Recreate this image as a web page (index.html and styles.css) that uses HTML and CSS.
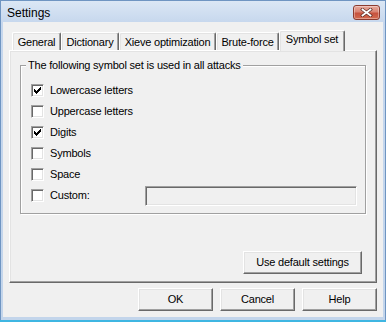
FILE: index.html
```html
<!DOCTYPE html>
<html>
<head>
<meta charset="utf-8">
<link rel="stylesheet" href="styles.css">
</head>
<body>
<div class="window">
  <div class="titlebar">
    <span class="title">Settings</span>
    <div class="close">
      <svg width="13" height="9" viewBox="0 0 13 9">
        <path d="M2.5 1.5 L10.5 7.5 M10.5 1.5 L2.5 7.5" stroke="#5a2a22" stroke-width="3.2" stroke-linecap="square"/>
        <path d="M2.5 1.5 L10.5 7.5 M10.5 1.5 L2.5 7.5" stroke="#ffffff" stroke-width="1.8" stroke-linecap="square"/>
      </svg>
    </div>
  </div>
  <div class="client">
    <div class="tabs">
      <div class="tab t-general">General</div>
      <div class="tab t-dict">Dictionary</div>
      <div class="tab t-xieve">Xieve optimization</div>
      <div class="tab t-brute">Brute-force</div>
      <div class="tab tab-active t-symbol">Symbol set</div>
    </div>
    <div class="panel">
      <div class="group">
        <span class="legend">The following symbol set is used in all attacks</span>
        <div class="row"><span class="check checked"><svg width="7" height="7" viewBox="0 0 7 7"><path d="M0 2h1v3h-1zM1 3h1v3h-1zM2 4h1v3h-1zM3 3h1v3h-1zM4 2h1v3h-1zM5 1h1v3h-1zM6 0h1v3h-1z" fill="#000"/></svg></span><span class="label">Lowercase letters</span></div>
        <div class="row"><span class="check"></span><span class="label">Uppercase letters</span></div>
        <div class="row"><span class="check checked"><svg width="7" height="7" viewBox="0 0 7 7"><path d="M0 2h1v3h-1zM1 3h1v3h-1zM2 4h1v3h-1zM3 3h1v3h-1zM4 2h1v3h-1zM5 1h1v3h-1zM6 0h1v3h-1z" fill="#000"/></svg></span><span class="label">Digits</span></div>
        <div class="row"><span class="check"></span><span class="label">Symbols</span></div>
        <div class="row"><span class="check"></span><span class="label">Space</span></div>
        <div class="row"><span class="check"></span><span class="label">Custom:</span><span class="textbox"></span></div>
      </div>
      <div class="panel-actions">
        <div class="btn btn-wide">Use default settings</div>
      </div>
    </div>
    <div class="dialog-buttons">
      <div class="btn">OK</div>
      <div class="btn">Cancel</div>
      <div class="btn">Help</div>
    </div>
  </div>
</div>
</body>
</html>
```
FILE: styles.css
```css
* { box-sizing: border-box; }
html, body { margin: 0; padding: 0; }
body {
  width: 386px;
  height: 322px;
  overflow: hidden;
  background: #3fb6e2;
  font-family: "Liberation Sans", Arial, sans-serif;
  font-size: 11px;
  letter-spacing: -0.2px;
  color: #000;
}
.window {
  width: 386px;
  height: 320px;
  background: linear-gradient(to bottom, #dbe7f5 0px, #c6d7ed 22px, #c3d5eb 100%);
  border-left: 1px solid #6f95c2;
  border-right: 1px solid #6f95c2;
  border-top: 1px solid #6f95c2;
  display: flex;
  flex-direction: column;
}
.titlebar {
  height: 21px;
  display: flex;
  align-items: flex-start;
  justify-content: space-between;
  padding-left: 6px;
  padding-right: 5px;
}
.title {
  font-size: 12px;
  letter-spacing: 0;
  line-height: 14px;
  margin-top: 5px;
  color: #000;
}
.close {
  width: 27px;
  height: 15px;
  margin-top: 4px;
  border: 1px solid #8b3b2f;
  border-radius: 3px;
  background: linear-gradient(to bottom, #e8aa9c 0%, #d98473 45%, #c6523e 55%, #d36a4f 100%);
  box-shadow: inset 0 0 0 1px rgba(255,255,255,0.35);
  display: flex;
  align-items: center;
  justify-content: center;
}
.client {
  flex: 1;
  margin: 0 2px 3px 2px;
  background: #f0f0f0;
  display: flex;
  flex-direction: column;
}
.tabs {
  margin-top: 8px;
  height: 20px;
  padding-left: 9px;
  display: flex;
  align-items: flex-end;
  position: relative;
  z-index: 1;
}
.tab {
  height: 18px;
  line-height: 13px;
  padding-top: 3px;
  text-align: center;
  white-space: nowrap;
  border-top: 1px solid #fff;
  border-left: 1px solid #fff;
  border-right: 1px solid #696969;
  border-top-left-radius: 2px;
  border-top-right-radius: 2px;
  box-shadow: inset -1px 0 0 #a0a0a0, inset 1px 1px 0 #e3e3e3;
  background: #f0f0f0;
}
.t-general { width: 49px; }
.t-dict { width: 58px; }
.t-xieve { width: 97px; }
.t-brute { width: 63px; }
.t-symbol { width: 66px; }
.tab-active {
  height: 21px;
  margin-bottom: -1px;
  padding-top: 2px;
}
.panel {
  margin: 0 6px;
  height: 233px;
  border-top: 1px solid #fff;
  border-left: 1px solid #fff;
  border-right: 1px solid #696969;
  border-bottom: 1px solid #696969;
  box-shadow: inset -1px -1px 0 #a0a0a0, inset 1px 1px 0 #e3e3e3;
  display: flex;
  flex-direction: column;
  padding: 14px 9px 0 10px;
}
.group {
  position: relative;
  height: 149px;
  border: 1px solid #a0a0a0;
  box-shadow: inset 1px 1px 0 #fff, 1px 1px 0 #fff;
  padding: 14px 8px 0 10px;
  margin-right: 1px;
}
.legend {
  position: absolute;
  left: 5px;
  top: -7px;
  line-height: 13px;
  padding: 0 2px;
  background: #f0f0f0;
  white-space: nowrap;
}
.row {
  height: 21px;
  display: flex;
  align-items: center;
}
.check {
  width: 13px;
  height: 13px;
  flex: none;
  background: #fff;
  border-top: 1px solid #a0a0a0;
  border-left: 1px solid #a0a0a0;
  border-right: 1px solid #fff;
  border-bottom: 1px solid #fff;
  box-shadow: inset 1px 1px 0 #696969, inset -1px -1px 0 #e3e3e3;
  display: flex;
  align-items: center;
  justify-content: center;
}
.check svg { display: block; }
.label {
  margin-left: 6px;
  line-height: 13px;
  white-space: nowrap;
}
.textbox {
  margin-left: auto;
  width: 212px;
  height: 20px;
  background: #f0f0f0;
  border-top: 1px solid #a0a0a0;
  border-left: 1px solid #a0a0a0;
  border-right: 1px solid #fff;
  border-bottom: 1px solid #fff;
  box-shadow: inset 1px 1px 0 #696969, inset -1px -1px 0 #e3e3e3;
}
.panel-actions {
  margin-top: auto;
  margin-bottom: 8px;
  display: flex;
  justify-content: flex-end;
  padding-right: 5px;
}
.btn {
  width: 75px;
  height: 23px;
  line-height: 13px;
  padding-top: 4px;
  text-align: center;
  background: #f0f0f0;
  border-top: 1px solid #fff;
  border-left: 1px solid #fff;
  border-right: 1px solid #696969;
  border-bottom: 1px solid #696969;
  box-shadow: inset -1px -1px 0 #a0a0a0, inset 1px 1px 0 #e3e3e3;
  white-space: nowrap;
}
.btn-wide { width: 119px; }
.dialog-buttons {
  margin-top: 5px;
  display: flex;
  justify-content: flex-end;
  gap: 7px;
  padding-right: 6px;
}
```
